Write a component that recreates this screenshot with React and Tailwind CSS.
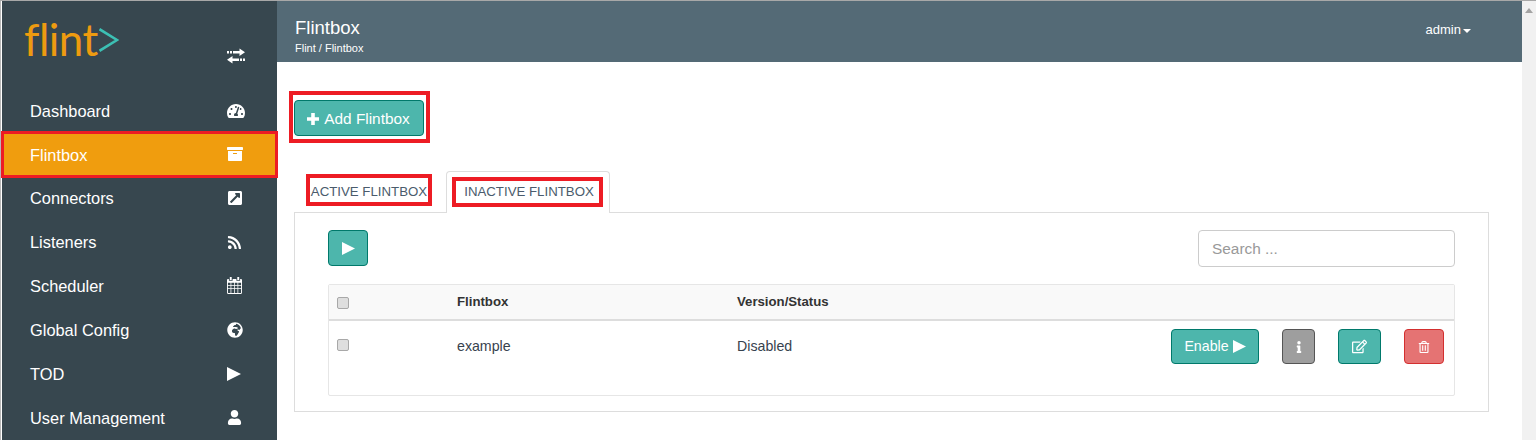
import React from "react";
import {
  FaArchive,
  FaExternalLinkSquareAlt,
  FaGlobeAfrica,
  FaInfo,
  FaRegEdit,
  FaRegTrashAlt,
  FaRss,
  FaTachometerAlt,
  FaUser,
} from "react-icons/fa";

// sharp play triangle, the package one has rounded corners
function PlayIcon({ className }) {
  return (
    <svg viewBox="0 0 14 14" className={className} fill="currentColor">
      <path d="M0 0 14 7 0 14z" />
    </svg>
  );
}

function PlusIcon({ className }) {
  return (
    <svg viewBox="0 0 12 12" className={className} fill="currentColor">
      <path d="M4.2 0h3.6v4.2H12v3.6H7.8V12H4.2V7.8H0V4.2h4.2z" />
    </svg>
  );
}

function CalendarIcon({ className }) {
  return (
    <svg viewBox="0 0 16 18" className={className} fill="currentColor">
      <path
        fillRule="evenodd"
        d="M3 0h2v3H3zM11 0h2v3h-2zM1.2 2H2v2h4V2h4v2h4V2h.8C15.5 2 16 2.5 16 3.2v13.6c0 .7-.5 1.2-1.2 1.2H1.2C.5 18 0 17.5 0 16.8V3.2C0 2.5.5 2 1.2 2zM1 6v2.5h2.8V6zm3.6 0v2.5h2.9V6zm3.7 0v2.5h2.9V6zm3.7 0v2.5H15V6zM1 9.3V12h2.8V9.3zm3.6 0V12h2.9V9.3zm3.7 0V12h2.9V9.3zm3.7 0V12H15V9.3zM1 12.8V17h2.8v-4.2zm3.6 0V17h2.9v-4.2zm3.7 0V17h2.9v-4.2zm3.7 0V17H15v-4.2z"
      />
    </svg>
  );
}

const navItems = [
  { label: "Dashboard", icon: <FaTachometerAlt className="size-[18px]" /> },
  { label: "Flintbox", icon: <FaArchive className="size-4" />, active: true },
  { label: "Connectors", icon: <FaExternalLinkSquareAlt className="size-4" /> },
  { label: "Listeners", icon: <FaRss className="size-[15px]" /> },
  { label: "Scheduler", icon: <CalendarIcon className="w-[15px] h-[17px]" /> },
  { label: "Global Config", icon: <FaGlobeAfrica className="size-4" /> },
  { label: "TOD", icon: <PlayIcon className="size-[14px]" /> },
  { label: "User Management", icon: <FaUser className="size-[15px]" /> },
];

// dotted double arrow from the old icon set, not in the package
function ExchangeIcon() {
  return (
    <svg viewBox="0 0 20 16" className="w-5 h-4" fill="#fff">
      <path d="M1 3h2v2.5H1zM4 3h2v2.5H4zM7 3h6.5V0.5L19 4.2l-5.5 3.8V5.6H7z" />
      <path d="M19 10.5h-2V13h2zM16 10.5h-2V13h2zM13 10.5H6.5V8L1 11.7l5.5 3.8v-2.4H13z" />
    </svg>
  );
}

function Logo() {
  return (
    <div className="flex items-start">
      <span className="text-[44px] leading-[44px] font-normal text-[#ee9b10] font-['Lato',sans-serif] tracking-[-0.5px]">flint</span>
      <svg viewBox="0 0 20 24" className="w-5 h-6 mt-[11px] ml-px" fill="none" stroke="#3cc0b4" strokeWidth="2.6">
        <path d="M0.5 1.2 18 12 0.5 22.8" />
      </svg>
    </div>
  );
}

function Sidebar() {
  return (
    <aside className="w-[275px] shrink-0 bg-[#37474f] text-white">
      <div className="h-[87.7px] flex justify-between pl-[22px] pr-[31px]">
        <div className="pt-[16px]"><Logo /></div>
        <div className="pt-[47px]"><ExchangeIcon /></div>
      </div>
      {navItems.map((item) => (
        <div
          key={item.label}
          className={`relative h-[43.85px] flex items-center justify-between pl-[28px] pr-[31px] text-[16.4px] ${item.active ? "bg-[#f09d0e]" : ""}`}
        >
          <span className="pt-px">{item.label}</span>
          <span className="w-5 flex justify-start pl-px">{item.icon}</span>
          {item.active && <div className="absolute -inset-x-px -inset-y-[2px] border-[3px] border-[#ed1c24]" />}
        </div>
      ))}
    </aside>
  );
}

function Checkbox() {
  return <span className="block size-3 rounded-[2px] bg-[#dedede] border border-[#a8a8a8]" />;
}

function ActionButton({ className, children }) {
  return (
    <button type="button" className={`h-[35px] rounded-[4px] border flex items-center justify-center text-white ${className}`}>
      {children}
    </button>
  );
}

function FlintboxTable() {
  return (
    <div className="mt-[17px] h-[112px] rounded-[2px] border border-[#e6e6e6] text-[14.2px] text-[#37424e]">
      <div className="h-[36px] flex items-center bg-[#f9f9f9] border-b-2 border-[#dddddd] font-bold text-[13.2px] text-[#333333]">
        <div className="w-[128px] pl-2 pt-[2px]"><Checkbox /></div>
        <div className="w-[280px]">Flintbox</div>
        <div>Version/Status</div>
      </div>
      <div className="flex items-start pt-[8px]">
        <div className="w-[128px] pl-2 pt-[10px]"><Checkbox /></div>
        <div className="w-[280px] pt-[7px]">example</div>
        <div className="pt-[7px]">Disabled</div>
        <div className="ml-auto mr-[10px] flex">
          <ActionButton className="w-[88px] gap-1 bg-[#4db6ac] border-[#00796b]">
            Enable <PlayIcon className="size-[13px]" />
          </ActionButton>
          <ActionButton className="ml-[23px] w-[33px] bg-[#9e9e9e] border-[#555555]">
            <FaInfo className="size-3" />
          </ActionButton>
          <ActionButton className="ml-[23px] w-[43px] bg-[#4db6ac] border-[#00796b]">
            <FaRegEdit className="size-[15px]" />
          </ActionButton>
          <ActionButton className="ml-[23px] w-[40px] bg-[#e57373] border-[#d32f2f]">
            <FaRegTrashAlt className="size-3" />
          </ActionButton>
        </div>
      </div>
    </div>
  );
}

export default function App() {
  return (
    <div className="h-[440px] overflow-hidden flex flex-col bg-white font-['Liberation_Sans',sans-serif]">
      <div className="h-px shrink-0 bg-[#a8a8a8]" />
      <div className="flex-1 flex min-h-0">
        <div className="w-[2px] shrink-0 bg-white border-l border-[#b8b8b8]" />
        <Sidebar />
        <main className="flex-1 min-w-0">
          <header className="h-[61px] bg-[#546a76] text-white flex justify-between">
            <div className="pl-[18px] pt-[16px]">
              <h1 className="text-[18.5px] leading-[22px]">Flintbox</h1>
              <p className="text-[11px] leading-[13px] mt-[3px]">Flint / Flintbox</p>
            </div>
            <div className="pr-[51px] pt-[21px] flex items-start text-[13px] leading-[15px]">
              admin
              <span className="mt-[7px] ml-[2px] border-x-[4px] border-t-[4px] border-x-transparent border-t-white" />
            </div>
          </header>

          <div className="pl-[12px]">
            <div className="mt-[29px] w-[141px] h-[52px] border-4 border-[#ed1c24] pt-[5px] pl-px">
              <button type="button" className="w-[130px] h-[36px] pt-px pr-px rounded-[4px] bg-[#4db6ac] border border-[#00796b] text-white text-[15.4px] flex items-center justify-center gap-[5px]">
                <PlusIcon className="size-3" /> Add Flintbox
              </button>
            </div>

            <div className="ml-[5px] w-[1195px]">
              <div className="mt-[28px] h-[41px] flex items-start text-[13.25px] text-[#4a5b6c]">
                <div className="mt-[3px] ml-[12px] w-[126px] h-[32px] pt-[3px] border-[4px] border-[#ed1c24] flex items-center justify-center">ACTIVE FLINTBOX</div>
                <div className="relative z-10 ml-[14px] w-[164px] h-[42px] border border-b-0 border-[#dddddd] rounded-t-[4px] bg-white pt-[5px] pl-[5px]">
                  <div className="w-[151px] h-[30px] pl-[3px] border-[4px] border-[#ed1c24] flex items-center justify-center">INACTIVE FLINTBOX</div>
                </div>
              </div>
              <section className="h-[200px] border border-[#dddddd] px-[33px] pt-[17px]">
                <div className="flex justify-between items-start">
                  <button type="button" className="w-[40px] h-[36px] rounded-[4px] bg-[#4db6ac] border border-[#00796b] text-white flex items-center justify-center">
                    <PlayIcon className="size-[13px]" />
                  </button>
                  <input
                    placeholder="Search ..."
                    className="w-[257px] h-[37px] rounded-[4px] border border-[#cccccc] px-[13px] text-[15.4px] placeholder:text-[#999999] outline-none"
                  />
                </div>
                <FlintboxTable />
              </section>
            </div>
          </div>
        </main>
        <div className="w-[14px] shrink-0 bg-[#f1f1f1] flex justify-center pt-[7px]">
          <span className="h-0 border-x-[4px] border-b-[5px] border-x-transparent border-b-[#a3a3a3]" />
        </div>
      </div>
    </div>
  );
}
